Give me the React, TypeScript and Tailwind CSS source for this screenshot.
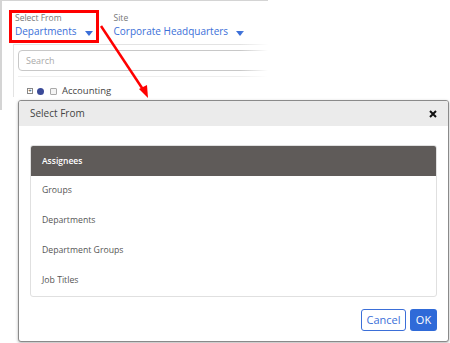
import React from "react";

const font = { fontFamily: '"Open Sans", "Noto Sans", sans-serif' };

function Caret() {
  return (
    <svg width="8" height="5" viewBox="0 0 8 5" className="ml-[8px] mt-[4px] shrink-0">
      <path d="M0 0 L8 0 L4 5 Z" fill="#3b6fd8" />
    </svg>
  );
}

export default function App() {
  const items = ["Groups", "Departments", "Department Groups", "Job Titles"];
  return (
    <div className="relative w-[450px] h-[343px] bg-white overflow-hidden" style={font}>
      {/* Background screenshot */}
      <div className="relative w-[268px] h-[110px] border-l-2 border-t border-[#d4d4d4] overflow-hidden">
        <div className="flex pl-[13px] pt-[11px] gap-[21px] whitespace-nowrap">
          <div className="flex flex-col">
            <span className="text-[8.5px] leading-[11px] text-[#777]">Select From</span>
            <div className="flex items-center">
              <span className="text-[10px] leading-[16px] text-[#3b6fd8]">Departments</span>
              <Caret />
            </div>
          </div>
          <div className="flex flex-col">
            <span className="text-[8.5px] leading-[11px] text-[#777]">Site</span>
            <div className="flex items-center">
              <span className="text-[10px] leading-[16px] text-[#3b6fd8]">Corporate Headquarters</span>
              <Caret />
            </div>
          </div>
        </div>
        <div className="ml-[11px] mt-[5px] border-l border-t border-[#e3e3e3] pt-[5px] pl-[4px]">
          <div className="h-[21px] rounded-[4px] border border-[#c8c8c8] flex items-center pl-[7px] mr-[-20px]">
            <span className="text-[9px] text-[#aaa]">Search</span>
          </div>
          <div className="mt-[5px] border-t border-[#efefef] pt-[8px] pl-[9px] flex items-center gap-[3px] whitespace-nowrap">
            <div className="w-[6px] h-[6px] border border-[#888] flex items-center justify-center text-[6px] leading-none text-[#333]">
              <span className="mt-[-1px]">+</span>
            </div>
            <div className="w-[7px] h-[7px] rounded-full bg-[#3a4a98] ml-[1px]" />
            <div className="w-[7px] h-[7px] border border-[#aaa] rounded-[1px] bg-[#f4f4f4] ml-[3px]" />
            <span className="text-[9.5px] leading-[12px] text-[#444] ml-[2px]">Accounting</span>
          </div>
        </div>
        {/* red highlight box */}
        <div className="absolute left-[7px] top-[9px] w-[90px] h-[33px] border-[3px] border-[#f00]" />
        {/* fade to white on right */}
        <div className="absolute inset-y-0 right-0 w-[28px] bg-gradient-to-r from-transparent to-white" />
      </div>

      {/* Arrow */}
      <svg className="absolute left-0 top-0" width="450" height="343">
        <line x1="101" y1="26" x2="144" y2="91" stroke="#f00" strokeWidth="2.5" />
        <path d="M148 98 L139 89 L147 85 Z" fill="#f00" />
      </svg>

      {/* Modal */}
      <div className="absolute left-[18px] top-[100px] w-[431px] h-[242px] border border-[#8a8a8a] rounded-[3px] bg-white shadow-[0_1px_3px_rgba(0,0,0,0.3)] flex flex-col overflow-hidden">
        <div className="h-[25px] bg-[#ebebeb] flex items-center justify-between pl-[11px] pr-[11px] shrink-0">
          <span className="text-[10px] text-[#444]">Select From</span>
          <svg width="8" height="8" viewBox="0 0 8 8">
            <path d="M1 1 L7 7 M7 1 L1 7" stroke="#111" strokeWidth="2" />
          </svg>
        </div>
        <div className="px-[11px] pt-[19px]">
          <div className="rounded-[3px] border border-[#e0e0e0] overflow-hidden">
            <div className="h-[30px] bg-[#5f5b59] flex items-center pl-[11px]">
              <span className="text-[8.5px] font-semibold text-white">Assignees</span>
            </div>
            {items.map((t) => (
              <div key={t} className="h-[30px] flex items-center pl-[11px]">
                <span className="text-[8.7px] text-[#555]">{t}</span>
              </div>
            ))}
          </div>
        </div>
        <div className="flex justify-end gap-[4px] px-[11px] mt-[12px]">
          <button className="w-[45px] h-[22px] border border-[#3b6fd8] rounded-[3px] text-[11px] text-[#3b6fd8] bg-white">Cancel</button>
          <button className="w-[27px] h-[22px] rounded-[3px] text-[11px] text-white bg-[#2f6ad8]">OK</button>
        </div>
      </div>
    </div>
  );
}
